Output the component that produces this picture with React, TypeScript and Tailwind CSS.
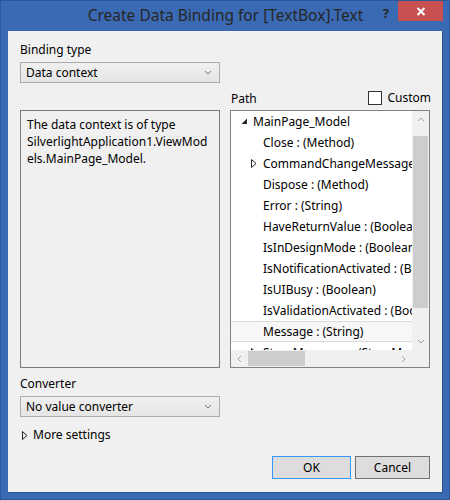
import React from "react";

const Chevron = () => (
  <svg width="8" height="5" viewBox="0 0 8 5" className="shrink-0">
    <path d="M1 1 L4 4 L7 1" fill="none" stroke="#707070" strokeWidth="1" />
  </svg>
);

const Combo = ({ text }: { text: string }) => (
  <div className="h-[21px] w-[200px] border border-[#acacac] bg-gradient-to-b from-[#f0f0f0] to-[#e5e5e5] flex items-center justify-between pl-[5px] pr-[7px] text-[12px] leading-none text-black">
    <span>{text}</span>
    <Chevron />
  </div>
);

const FilledTri = () => (
  <svg width="7" height="7" viewBox="0 0 7 7" className="shrink-0">
    <path d="M6 0.5 L6 6 L0.5 6 Z" fill="#262626" />
  </svg>
);

const HollowTri = () => (
  <svg width="6" height="9" viewBox="0 0 6 9" className="shrink-0">
    <path d="M0.5 0.5 L5 4.5 L0.5 8.5 Z" fill="none" stroke="#262626" strokeWidth="1" />
  </svg>
);

type Row = { text: string; kind: "root" | "leaf" | "branch"; selected?: boolean };

const rows: Row[] = [
  { text: "MainPage_Model", kind: "root" },
  { text: "Close : (Method)", kind: "leaf" },
  { text: "CommandChangeMessage : (Command)", kind: "branch" },
  { text: "Dispose : (Method)", kind: "leaf" },
  { text: "Error : (String)", kind: "leaf" },
  { text: "HaveReturnValue : (Boolean)", kind: "leaf" },
  { text: "IsInDesignMode : (Boolean)", kind: "leaf" },
  { text: "IsNotificationActivated : (Boolean)", kind: "leaf" },
  { text: "IsUIBusy : (Boolean)", kind: "leaf" },
  { text: "IsValidationActivated : (Boolean)", kind: "leaf" },
  { text: "Message : (String)", kind: "leaf", selected: true },
  { text: "StoreMessages : (StoreMessage)", kind: "branch" },
];

export default function App() {
  return (
    <div className="w-[450px] h-[500px] bg-[#3b6ab4] border border-[#2c5796] flex flex-col font-['Noto_Sans','Liberation_Sans',sans-serif] text-black overflow-hidden">
      {/* Title bar */}
      <div className="relative h-[30px] shrink-0">
        <div className="w-full text-center text-[15.5px] leading-[28px] text-[#262626] pl-[1px]">
          Create Data Binding for [TextBox].Text
        </div>
        <div className="absolute right-[6px] top-0 flex items-start">
          <div className="text-[13px] font-bold text-[#262626] leading-none mt-[6px] mr-[9px]">?</div>
          <div className="w-[45px] h-[20px] bg-[#c75050] flex items-center justify-center">
            <svg width="10" height="9" viewBox="0 0 10 9">
              <path d="M1.5 1 L8.5 8 M8.5 1 L1.5 8" stroke="#ffffff" strokeWidth="2" />
            </svg>
          </div>
        </div>
      </div>

      {/* Content */}
      <div className="ml-[7px] w-[435px] h-[462px] bg-[#f0f0f0] border-r border-b border-[#2a5290] flex flex-col pl-[12px] pt-[11px]">
        <div className="text-[12px] leading-[16px]">Binding type</div>
        <div className="mt-[4px]">
          <Combo text="Data context" />
        </div>

        <div className="flex mt-[5px] gap-[10px]">
          {/* Left column */}
          <div className="flex flex-col w-[200px]">
            <div className="h-[22px]" />
            <div className="h-[258px] border border-[#7a7a7a] px-[6px] py-[5px] text-[12px] leading-[17px]">
              <div className="whitespace-nowrap">The data context is of type</div>
              <div className="whitespace-nowrap">SilverlightApplication1.ViewMod</div>
              <div className="whitespace-nowrap">els.MainPage_Model.</div>
            </div>
          </div>

          {/* Right column */}
          <div className="flex flex-col w-[200px]">
            <div className="h-[22px] flex items-center justify-between text-[12px] leading-none">
              <span className="ml-[1px]">Path</span>
              <div className="flex items-center gap-[5px] -mr-[1px] mb-[3px]">
                <div className="w-[14px] h-[14px] border border-[#333333] bg-white" />
                <span>Custom</span>
              </div>
            </div>
            <div className="h-[258px] border border-[#828282] bg-white flex flex-col overflow-hidden">
              <div className="flex h-[239px]">
                <div className="w-[181px] shrink-0 overflow-hidden">
                  {rows.map((r, i) => (
                    <div
                      key={i}
                      className={
                        "h-[21px] w-max min-w-full flex items-center text-[12px] whitespace-nowrap " +
                        (r.selected ? "bg-[#f7f7f7] border-y border-[#dadada]" : "")
                      }
                    >
                      {r.kind === "root" && (
                        <>
                          <div className="w-[10px] shrink-0" />
                          <FilledTri />
                          <div className="w-[5px] shrink-0" />
                        </>
                      )}
                      {r.kind === "branch" && (
                        <>
                          <div className="w-[20px] shrink-0" />
                          <HollowTri />
                          <div className="w-[6px] shrink-0" />
                        </>
                      )}
                      {r.kind === "leaf" && <div className="w-[32px] shrink-0" />}
                      <span className="shrink-0">{r.text}</span>
                    </div>
                  ))}
                </div>
                {/* vertical scrollbar */}
                <div className="w-[17px] shrink-0 bg-[#f0f0f0] flex flex-col items-center">
                  <div className="h-[17px] flex items-center justify-center">
                    <svg width="8" height="5" viewBox="0 0 8 5">
                      <path d="M1 4 L4 1 L7 4" fill="none" stroke="#a0a0a0" strokeWidth="1" />
                    </svg>
                  </div>
                  <div className="w-[15px] h-[172px] mt-[8px] bg-[#cdcdcd]" />
                  <div className="flex-1" />
                  <div className="h-[17px] flex items-center justify-center">
                    <svg width="8" height="5" viewBox="0 0 8 5">
                      <path d="M1 1 L4 4 L7 1" fill="none" stroke="#a0a0a0" strokeWidth="1" />
                    </svg>
                  </div>
                </div>
              </div>
              {/* horizontal scrollbar */}
              <div className="h-[17px] flex bg-[#f0f0f0]">
                <div className="w-[181px] flex items-center">
                  <div className="w-[17px] flex justify-center">
                    <svg width="5" height="8" viewBox="0 0 5 8">
                      <path d="M4 1 L1 4 L4 7" fill="none" stroke="#a0a0a0" strokeWidth="1" />
                    </svg>
                  </div>
                  <div className="w-[57px] h-[15px] bg-[#cdcdcd]" />
                  <div className="flex-1" />
                  <div className="w-[17px] flex justify-center">
                    <svg width="5" height="8" viewBox="0 0 5 8">
                      <path d="M1 1 L4 4 L1 7" fill="none" stroke="#a0a0a0" strokeWidth="1" />
                    </svg>
                  </div>
                </div>
                <div className="w-[17px]" />
              </div>
            </div>
          </div>
        </div>

        <div className="text-[12px] leading-[16px] mt-[8px]">Converter</div>
        <div className="mt-[4px]">
          <Combo text="No value converter" />
        </div>

        <div className="flex items-center mt-[10px] h-[16px] text-[12px]">
          <div className="ml-[2px]">
            <HollowTri />
          </div>
          <span className="ml-[5px]">More settings</span>
        </div>

        <div className="flex justify-end gap-[4px] mt-[13px] pr-[12px]">
          <div className="w-[79px] h-[23px] border border-[#3399ff] bg-[#dddddd] flex items-center justify-center text-[12px]">
            OK
          </div>
          <div className="w-[75px] h-[23px] border border-[#707070] bg-[#dddddd] flex items-center justify-center text-[12px]">
            Cancel
          </div>
        </div>
      </div>
    </div>
  );
}
